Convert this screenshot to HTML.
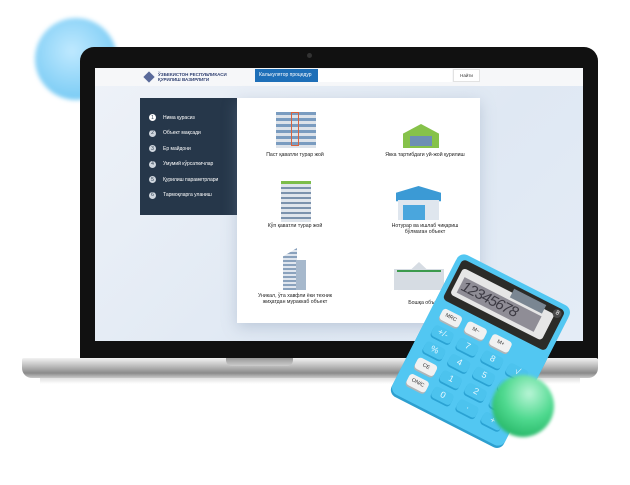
<!DOCTYPE html>
<html><head><meta charset="utf-8"><style>
*{margin:0;padding:0;box-sizing:border-box}
body{width:630px;height:485px;background:#fff;position:relative;overflow:hidden;font-family:"Liberation Sans",sans-serif}
.a{position:absolute}
.side div{height:15.5px;display:flex;align-items:center;color:#fff;font-size:5px;padding-left:9px}
.side span{width:7px;height:7px;border-radius:50%;background:#cfd6de;color:#26374a;font-size:5px;display:inline-flex;align-items:center;justify-content:center;margin-right:7px}
.cap{font-size:5.2px;color:#222;text-align:center;position:absolute}
.k{position:absolute;width:24px;height:14px;background:#4cc3ee;border-radius:4px;box-shadow:0 2px 0 #2aa2d3;color:#e8f8ff;font-size:10px;text-align:center;line-height:14px}
.w{background:#f1f1f1;box-shadow:0 2px 0 #aeb5b8;color:#333;font-size:6px}
</style></head><body>
<div class="a" style="left:35px;top:18px;width:82px;height:82px;border-radius:50%;background:radial-gradient(circle at 45% 40%,#bfe9ff,#7ecdf5 70%,#a9dcf5);filter:blur(2px)"></div>
<div class="a" style="left:80px;top:47px;width:518px;height:312px;background:#111;border-radius:14px 14px 0 0"></div>
<div class="a" style="left:307px;top:53px;width:5px;height:5px;border-radius:50%;background:#333"></div>
<div class="a" style="left:95px;top:68px;width:488px;height:273px;background:linear-gradient(135deg,#eef2f8,#dfe8f3 60%,#e4ecf6)"></div>
<div class="a" style="left:95px;top:68px;width:488px;height:18px;background:#f6f7f9"></div>
<div class="a" style="left:145px;top:73px;width:8px;height:8px;background:#5a6a9a;transform:rotate(45deg)"></div>
<div class="a" style="left:158px;top:72px;font-size:4.5px;font-weight:bold;color:#2f3f70;line-height:5px">ЎЗБЕКИСТОН РЕСПУБЛИКАСИ<br>ҚУРИЛИШ ВАЗИРЛИГИ</div>
<div class="a" style="left:255px;top:69px;width:63px;height:13px;background:#1e6fb8;color:#fff;font-size:5px;line-height:13px;padding-left:4px">Калькулятор процедур</div>
<div class="a" style="left:318px;top:69px;width:134px;height:13px;background:#fff"></div>
<div class="a" style="left:453px;top:69px;width:27px;height:13px;background:#fff;border:1px solid #e2e2e2;font-size:4.5px;line-height:11px;text-align:center;color:#333">Найти</div>
<div class="a side" style="left:140px;top:98px;width:97px;height:117px;background:#26374a;padding-top:12px">
<div><span style="background:#fff">1</span>Нима қурасиз</div><div><span>2</span>Объект мақсади</div><div><span>3</span>Ер майдони</div><div><span>4</span>Умумий кўрсаткичлар</div><div><span>5</span>Қурилиш параметрлари</div><div><span>6</span>Тармоқларга уланиш</div></div>
<div class="a" style="left:237px;top:98px;width:243px;height:225px;background:#fff;box-shadow:0 4px 14px rgba(120,140,170,.35)"></div>
<div class="a" style="left:276px;top:112px;width:40px;height:36px;background:repeating-linear-gradient(#7a9cc0 0 3px,#dde3ea 3px 6px)"></div>
<div class="a" style="left:291px;top:112px;width:8px;height:34px;border:1px solid #d9643f"></div>
<div class="cap" style="left:250px;top:152px;width:90px">Паст қаватли турар жой</div>
<div class="a" style="left:403px;top:124px;width:36px;height:24px;background:#86c24a;clip-path:polygon(0 40%,50% 0,100% 40%,100% 100%,0 100%)"></div>
<div class="a" style="left:410px;top:136px;width:22px;height:10px;background:#6d8fb4"></div>
<div class="cap" style="left:370px;top:152px;width:110px">Якка тартибдаги уй-жой қурилиш</div>
<div class="a" style="left:281px;top:182px;width:30px;height:40px;background:repeating-linear-gradient(#7b92ad 0 2px,#dfe5ec 2px 5px)"></div>
<div class="a" style="left:281px;top:181px;width:30px;height:3px;background:#7cbd4a"></div>
<div class="cap" style="left:250px;top:223px;width:90px">Кўп қаватли турар жой</div>
<div class="a" style="left:396px;top:186px;width:45px;height:34px;background:#3b9ad5;clip-path:polygon(0 20%,50% 0,100% 20%,100% 45%,0 45%)"></div>
<div class="a" style="left:398px;top:200px;width:41px;height:20px;background:#dfe6ee"></div>
<div class="a" style="left:403px;top:205px;width:22px;height:15px;background:#4aa6dd"></div>
<div class="cap" style="left:370px;top:223px;width:110px;line-height:6px">Нотурар ва ишлаб чиқариш<br>бўлмаган объект</div>
<div class="a" style="left:283px;top:248px;width:14px;height:42px;background:repeating-linear-gradient(#8aa2bd 0 2px,#e0e6ee 2px 4px);clip-path:polygon(0 20%,100% 0,100% 100%,0 100%)"></div>
<div class="a" style="left:296px;top:260px;width:10px;height:30px;background:#a6b8cc"></div>
<div class="cap" style="left:245px;top:293px;width:100px;line-height:6px">Уникал, ўта хавфли ёки техник<br>жиҳатдан мураккаб объект</div>
<div class="a" style="left:394px;top:262px;width:50px;height:28px;background:#d6dce3;clip-path:polygon(0 25%,35% 25%,50% 0,65% 25%,100% 25%,100% 100%,0 100%)"></div>
<div class="a" style="left:397px;top:270px;width:44px;height:2px;background:#3c9a4d"></div>
<div class="cap" style="left:370px;top:300px;width:110px">Бошқа объект</div>
<div class="a" style="left:22px;top:358px;width:576px;height:20px;border-radius:2px 2px 10px 10px;background:linear-gradient(#f2f2f2,#bdbdbd 40%,#8a8a8a 75%,#c8c8c8)"></div>
<div class="a" style="left:226px;top:358px;width:67px;height:8px;border-radius:0 0 6px 6px;background:linear-gradient(#999,#ccc)"></div>
<div class="a" style="left:40px;top:378px;width:540px;height:6px;background:linear-gradient(rgba(0,0,0,.12),transparent)"></div>
<div class="a" style="left:411px;top:260px;width:140px;height:180px;transform:rotate(27deg) scale(.9,.87);transform-origin:center">
<div class="a" style="left:0;top:0;width:140px;height:180px;background:#52c7f2;border-radius:9px;box-shadow:0 3px 0 #2d9fcf"></div>
<div class="a" style="left:6px;top:6px;width:128px;height:52px;background:#2b2b28;border-radius:5px"></div>
<div class="a" style="left:11px;top:15px;width:114px;height:34px;background:#e6e6e6;border-radius:4px"></div>
<div class="a" style="left:17px;top:24px;width:96px;height:20px;background:#8f8d96;color:#3d3b44;font-size:17px;line-height:20px;letter-spacing:-1px;font-style:italic;padding-left:2px">12345678</div>
<div class="a" style="left:72px;top:10px;width:40px;height:11px;background:#7a8692"></div>
<div class="a" style="left:122px;top:8px;width:10px;height:10px;border-radius:50%;background:#4a4a4a;color:#fff;font-size:7px;text-align:center;line-height:10px">8</div>
<div class="k w" style="left:12px;top:66px">MRC</div><div class="k w" style="left:43px;top:66px">M−</div><div class="k w" style="left:74px;top:66px">M+</div>
<div class="k" style="left:12px;top:87px">+/-</div><div class="k" style="left:43px;top:87px">7</div><div class="k" style="left:74px;top:87px">8</div><div class="k" style="left:105px;top:87px">√</div>
<div class="k" style="left:12px;top:108px">%</div><div class="k" style="left:43px;top:108px">4</div><div class="k" style="left:74px;top:108px">5</div><div class="k" style="left:105px;top:108px">÷</div>
<div class="k w" style="left:12px;top:129px">CE</div><div class="k" style="left:43px;top:129px">1</div><div class="k" style="left:74px;top:129px">2</div><div class="k" style="left:105px;top:129px">×</div>
<div class="k w" style="left:12px;top:150px">ON/C</div><div class="k" style="left:43px;top:150px">0</div><div class="k" style="left:74px;top:150px">·</div><div class="k" style="left:105px;top:150px">+</div>
</div>
<div class="a" style="left:492px;top:375px;width:62px;height:62px;border-radius:50%;background:radial-gradient(circle at 60% 30%,#b8f5d6,#4fd98f 45%,#27b768 80%);filter:blur(1.5px)"></div>
</body></html>
